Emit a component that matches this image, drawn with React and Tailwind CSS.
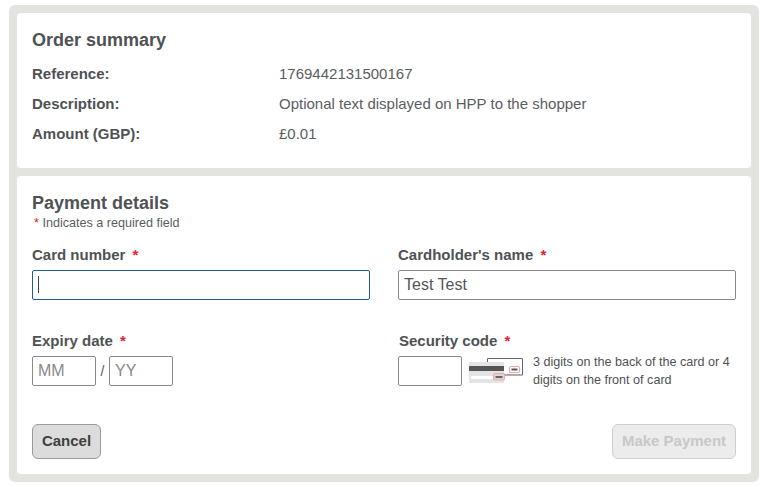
const font = { fontFamily: '"Liberation Sans", Arial, sans-serif' };

function Star({ className = "" }) {
  return <span className={`text-[#e5202e] ${className}`}>*</span>;
}

function SummaryRow({ label, value }) {
  return (
    <div className="flex h-[30px] items-center text-[15px] text-[#4f5254]">
      <span className="w-[247px] font-bold">{label}</span>
      <span className="text-[#5a5d5f]">{value}</span>
    </div>
  );
}

function CardIllustration() {
  return (
    <svg width="56" height="30" viewBox="0 0 56 30" className="block shrink-0">
      <path d="M18.5 6V2.5h35V19H36" fill="#fff" stroke="#666" strokeWidth="1" />
      <rect x="40.5" y="10.5" width="10" height="6" rx="1.5" fill="#fff" stroke="#f3a5a5" strokeWidth="1.2" />
      <rect x="42.5" y="12.5" width="6" height="2" fill="#555" />
      <rect x="0" y="6" width="35" height="21" fill="#e4e4e4" />
      <rect x="0" y="10" width="35" height="5" fill="#555" />
      <rect x="2" y="20" width="23" height="3" fill="#fff" />
      <rect x="24.5" y="17.5" width="11" height="6.5" rx="1.5" fill="#d8d8d8" stroke="#f3a5a5" strokeWidth="1.2" />
      <rect x="26.5" y="20" width="7" height="2" fill="#666" />
      <path d="M36 18.5h15" stroke="#999" strokeWidth="1" strokeDasharray="1 1" />
    </svg>
  );
}

export default function App() {
  return (
    <div style={font} className="h-[487px] w-[763px] bg-white pl-[9px] pt-[5px]">
      <div className="flex h-[477px] w-[750px] flex-col gap-2 rounded-md bg-[#e4e4df] p-2">
        <section className="h-[155px] rounded-[4px] bg-white px-[15px] pt-4">
          <h2 className="mb-2 text-lg leading-[22px] font-bold text-[#4f5254]">Order summary</h2>
          <SummaryRow label="Reference:" value="1769442131500167" />
          <SummaryRow label="Description:" value="Optional text displayed on HPP to the shopper" />
          <SummaryRow label="Amount (GBP):" value="£0.01" />
        </section>

        <section className="flex h-[298px] flex-col rounded-[4px] bg-white px-[15px] pt-4">
          <h2 className="text-lg leading-[22px] font-bold text-[#4f5254]">Payment details</h2>
          <p className="mt-0.5 pl-0.5 text-[12.6px] leading-[14px] text-[#5a5d5f]">
            <Star /> Indicates a required field
          </p>

          <div className="mt-[17px] grid grid-cols-[338px_338px] gap-x-[28px]">
            <div>
              <label className="block text-[15px] leading-4 font-bold text-[#4f5254]">
                Card number <Star className="ml-[3px]" />
              </label>
              <div className="relative mt-[7px]">
                <input className="h-[30px] w-full rounded-[2px] border border-[#1f5a9c] px-[5px] text-base text-[#555] outline-none" />
                <span className="absolute top-[6px] left-[6px] h-[17px] w-px bg-[#444]" />
              </div>
            </div>
            <div>
              <label className="block text-[15px] leading-4 font-bold text-[#4f5254]">
                Cardholder's name <Star className="ml-[3px]" />
              </label>
              <input
                defaultValue="Test Test"
                className="mt-[7px] h-[30px] w-full rounded-[2px] border border-[#8a8a8a] px-[5px] text-base text-[#555] outline-none"
              />
            </div>
          </div>

          <div className="mt-[33px] grid grid-cols-[338px_338px] gap-x-[29px]">
            <div>
              <label className="block text-[15px] leading-4 font-bold text-[#4f5254]">
                Expiry date <Star className="ml-[3px]" />
              </label>
              <div className="mt-[7px] flex items-center text-[#555]">
                <input placeholder="MM" className="h-[30px] w-16 rounded-[2px] border border-[#8a8a8a] px-[5px] text-base outline-none placeholder:text-[#8a8a8a]" />
                <span className="w-[13px] text-center text-sm">/</span>
                <input placeholder="YY" className="h-[30px] w-16 rounded-[2px] border border-[#8a8a8a] px-[5px] text-base outline-none placeholder:text-[#8a8a8a]" />
              </div>
            </div>
            <div>
              <label className="block text-[15px] leading-4 font-bold text-[#4f5254]">
                Security code <Star className="ml-[3px]" />
              </label>
              <div className="mt-[7px] -ml-px flex h-[30px] items-center">
                <input className="h-[30px] w-16 rounded-[2px] border border-[#8a8a8a] outline-none" />
                <span className="ml-[7px]"><CardIllustration /></span>
                <p className="ml-[8px] w-[205px] text-[12.6px] leading-[18px] text-[#4f5254]">
                  3 digits on the back of the card or 4 digits on the front of card
                </p>
              </div>
            </div>
          </div>

          <div className="mt-[38px] flex justify-between">
            <button className="h-[35px] w-[69px] rounded-md border border-[#9a9a9a] bg-[#dcdcdc] text-[15px] font-bold text-[#3f3f3f]">Cancel</button>
            <button className="h-[35px] w-[124px] rounded-md border border-[#cfcfcf] bg-[#ececec] text-[15px] font-bold text-[#c8c8c8]">Make Payment</button>
          </div>
        </section>
      </div>
    </div>
  );
}
